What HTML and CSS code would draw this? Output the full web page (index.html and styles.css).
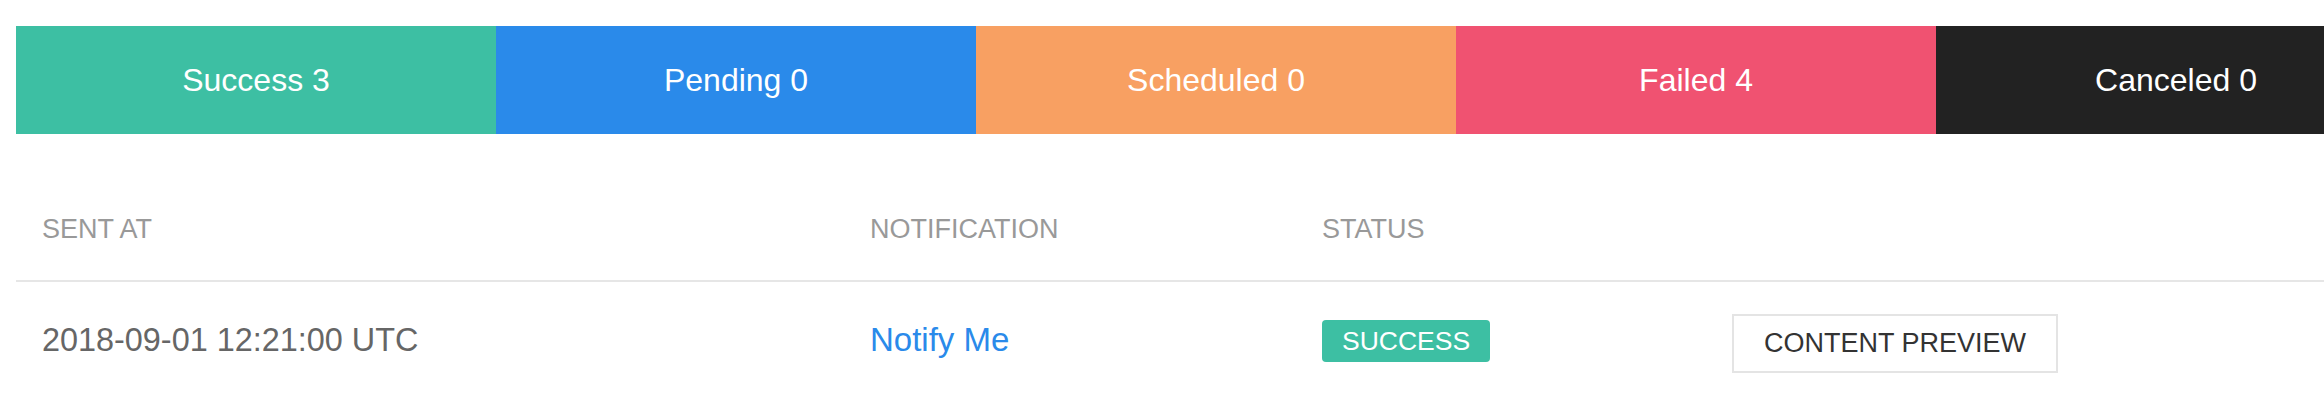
FILE: index.html
```html
<!DOCTYPE html>
<html lang="en">
<head>
<meta charset="utf-8">
<title>Notification deliveries</title>
<link rel="stylesheet" href="styles.css">
</head>
<body>
<div class="page">
  <div class="summary">
    <div class="seg seg-success">Success 3</div>
    <div class="seg seg-pending">Pending 0</div>
    <div class="seg seg-scheduled">Scheduled 0</div>
    <div class="seg seg-failed">Failed 4</div>
    <div class="seg seg-canceled">Canceled 0</div>
  </div>
  <div class="table">
    <div class="row head">
      <div class="cell">SENT AT</div>
      <div class="cell">NOTIFICATION</div>
      <div class="cell">STATUS</div>
      <div class="cell"></div>
    </div>
    <div class="row body">
      <div class="cell date">2018-09-01 12:21:00 UTC</div>
      <div class="cell"><a class="link" href="#">Notify Me</a></div>
      <div class="cell"><span class="badge">SUCCESS</span></div>
      <div class="cell"><button class="btn" type="button">CONTENT PREVIEW</button></div>
    </div>
  </div>
</div>
</body>
</html>
```

FILE: styles.css
```css
html, body {
  margin: 0;
  padding: 0;
  background: #fff;
  overflow: hidden;
}

.page {
  width: 2400px;
  padding: 26px 0 0 16px;
  font-family: "Liberation Sans", Arial, Helvetica, sans-serif;
}

.summary {
  display: flex;
  height: 108px;
}

.seg {
  flex: 0 0 480px;
  display: flex;
  align-items: center;
  justify-content: center;
  color: #fff;
  font-size: 32px;
}

.seg-success { background: #3dbfa3; }
.seg-pending { background: #2a8aea; }
.seg-scheduled { background: #f8a062; }
.seg-failed { background: #f05271; }
.seg-canceled { background: #222222; }

.table {
  margin-top: 75px;
}

.row {
  display: grid;
  grid-template-columns: 828px 452px 410px 710px;
  align-items: center;
}

.cell {
  padding-left: 26px;
}

.head {
  height: 71px;
  align-items: start;
  border-bottom: 2px solid #e6e6e6;
  color: #999999;
  font-size: 27px;
  line-height: 40px;
}

.body {
  height: 116px;
}

.date {
  color: #666666;
  font-size: 32.4px;
}

.link {
  color: #2a8aea;
  font-size: 33px;
  text-decoration: none;
}

.badge {
  display: inline-flex;
  align-items: center;
  height: 42px;
  padding: 0 20px;
  border-radius: 4px;
  background: #3dbfa3;
  color: #fff;
  font-size: 26.5px;
  margin-top: 2px;
}

.btn {
  display: inline-flex;
  align-items: center;
  height: 59px;
  padding: 0 30px;
  border: 2px solid #e4e4e4;
  background: #fff;
  color: #333333;
  font-family: inherit;
  font-size: 27px;
  margin-top: 6px;
}
```
